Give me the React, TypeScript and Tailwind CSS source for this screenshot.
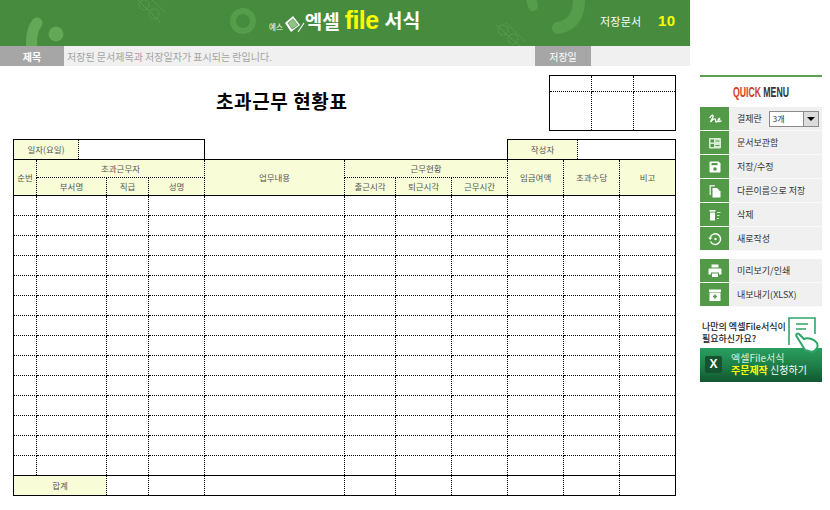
import React from "react";

const font = "font-['Noto_Sans_CJK_KR','Noto_Sans',sans-serif]";
const latin = "font-['Liberation_Sans',sans-serif]";

function HeaderDecor() {
  return (
    <svg className="absolute left-0 top-0" width="690" height="46" viewBox="0 0 690 46" fill="none">
      <path d="M32 50 Q30 32 37 23" stroke="#62a857" strokeWidth="11" strokeLinecap="round" />
      <circle cx="56" cy="34" r="7.5" fill="#62a857" />
      <circle cx="243" cy="21" r="10" stroke="#559c4b" strokeWidth="6" />
      <path d="M579 -6 Q581 24 558 28" stroke="#559c4b" strokeWidth="12" strokeLinecap="round" />
      <path d="M530 -4 L533 6" stroke="#559c4b" strokeWidth="10" strokeLinecap="round" />
      <g stroke="#6fae65" strokeWidth="0.7" strokeDasharray="1.5 1">
        <circle cx="144" cy="5" r="5" />
        <circle cx="154" cy="14" r="5" />
        <path d="M136 -2 L160 22 M146 -6 L165 12" />
        <circle cx="503" cy="30" r="5" />
        <circle cx="513" cy="39" r="5" />
        <path d="M496 25 L520 46 M506 23 L526 42" />
      </g>
    </svg>
  );
}

function Logo() {
  return (
    <div className="absolute left-[269px] top-[-3px] flex h-[46px] items-center text-white">
      <span className="mt-[14px] text-[7.5px] leading-none">예스</span>
      <svg width="22" height="24" viewBox="0 0 22 24" fill="none" className="mt-[8px]">
        <path d="M2 11 L10 4 L17 13 L8 20 Z" fill="#fff" />
        <path d="M5 11 L10 7 L15 13 L9 17 Z" fill="#8fc388" stroke="#478b3e" strokeWidth="0.7" />
        <path d="M15 20 L21 11" stroke="#fff" strokeWidth="1.1" />
      </svg>
      <span className="text-[19px] font-bold leading-none">엑셀</span>
      <span className={`${latin} ml-[5px] text-[25px] font-bold leading-none tracking-[-0.6px] text-[#fdfd00]`}>file</span>
      <span className="ml-[6px] text-[19.5px] font-bold leading-none">서식</span>
    </div>
  );
}

function TopBar() {
  return (
    <div>
      <div className="relative h-[46px] overflow-hidden bg-[#478b3e]">
        <HeaderDecor />
        <Logo />
        <span className="absolute left-[600px] top-[13px] text-[11px] leading-[16px] tracking-[0.2px] text-white">저장문서</span>
        <span className={`${latin} absolute left-[658px] top-[12px] text-[15px] font-bold leading-[18px] tracking-[0.5px] text-[#fdfd00]`}>10</span>
      </div>
      <div className="flex h-[20px] bg-[#f0f0f0] text-[10px]">
        <div className="flex w-[64px] items-center justify-center bg-[#a6a6a6] font-bold text-white">제목</div>
        <div className="flex w-[471px] items-center pl-[3px] text-[#a3a3a3]">저장된 문서제목과 저장일자가 표시되는 란입니다.</div>
        <div className="flex w-[56px] items-center justify-center bg-[#a6a6a6] text-white">저장일</div>
      </div>
    </div>
  );
}

function ApprovalBox() {
  const cell = "border-r border-dotted border-black";
  return (
    <div className="ml-[549px] mt-[9px] grid h-[56px] w-[127px] grid-cols-[42px_42px_1fr] grid-rows-[16px_1fr] border border-black">
      <div className={`${cell} border-b`} />
      <div className={`${cell} border-b`} />
      <div className="border-b border-dotted border-black" />
      <div className={cell} />
      <div className={cell} />
      <div />
    </div>
  );
}

const widths = [23, 70, 42, 56, 140, 51, 56, 56, 56, 56, 56];
const yellow = "bg-[#f8fdd8]";
const th = `border border-dotted border-black ${yellow} p-0 text-center align-middle text-[8.5px] font-normal leading-none text-[#555]`;
const td = "h-[20px] border border-dotted border-black p-0";
const rows = Array.from({ length: 14 }, (_, i) => i);

function InfoBox({ label, labelWidth, width }: { label: string; labelWidth: number; width: number }) {
  return (
    <div className="flex h-[20px] border border-b-0 border-black" style={{ width }}>
      <div className={`flex items-center justify-center border-r border-dotted border-black ${yellow} text-[8.5px] text-[#555]`} style={{ width: labelWidth }}>
        {label}
      </div>
    </div>
  );
}

function Sheet() {
  return (
    <div className="relative ml-[13px] mt-[8px] w-[663px]">
      <h1 className="absolute left-[203px] top-[-51px] text-[19px] font-bold leading-[26px] tracking-[0.6px] text-black">초과근무 현황표</h1>
      <div className="flex justify-between">
        <InfoBox label="일자(요일)" labelWidth={65} width={192} />
        <InfoBox label="작성자" labelWidth={70} width={169} />
      </div>
      <table className="w-[663px] table-fixed border-collapse">
        <colgroup>
          {widths.map((w, i) => (
            <col key={i} style={{ width: w }} />
          ))}
        </colgroup>
        <thead>
          <tr className="h-[18px]">
            <th rowSpan={2} className={`${th} border-t-black [border-top-style:solid] [border-left-style:solid]`}>순번</th>
            <th colSpan={3} className={`${th} [border-top-style:solid]`}>초과근무자</th>
            <th rowSpan={2} className={`${th} [border-top-style:solid]`}>업무내용</th>
            <th colSpan={3} className={`${th} [border-top-style:solid]`}>근무현황</th>
            <th rowSpan={2} className={`${th} [border-top-style:solid]`}>임금여액</th>
            <th rowSpan={2} className={`${th} [border-top-style:solid]`}>초과수당</th>
            <th rowSpan={2} className={`${th} [border-top-style:solid] [border-right-style:solid]`}>비고</th>
          </tr>
          <tr className="h-[18px]">
            {["부서명", "직급", "성명", "출근시각", "퇴근시각", "근무시간"].map((t) => (
              <th key={t} className={th}>{t}</th>
            ))}
          </tr>
        </thead>
        <tbody>
          {rows.map((r) => (
            <tr key={r}>
              {widths.map((_, c) => (
                <td
                  key={c}
                  className={`${td} ${r === 0 ? "[border-top-style:solid]" : ""} ${c === 0 ? "[border-left-style:solid]" : ""} ${c === 10 ? "[border-right-style:solid]" : ""}`}
                />
              ))}
            </tr>
          ))}
          <tr>
            <td colSpan={2} className={`${td} ${yellow} text-center text-[8.5px] leading-none text-[#555] [border-top-style:solid] [border-bottom-style:solid] [border-left-style:solid]`}>합계</td>
            {widths.slice(2).map((_, c) => (
              <td key={c} className={`${td} [border-top-style:solid] [border-bottom-style:solid] ${c === 8 ? "[border-right-style:solid]" : ""}`} />
            ))}
          </tr>
        </tbody>
      </table>
    </div>
  );
}

const Ico = ({ children }: { children: React.ReactNode }) => (
  <svg width="16" height="16" viewBox="0 0 16 16" fill="none">{children}</svg>
);

const icons = {
  sign: (
    <Ico>
      <path d="M3 6.5 C5 3 7 3.5 5.5 7 L3.5 11 C5.5 8.5 8 7 8.5 8.5 C8.5 11 9 11.5 10.5 10.5 C12.5 9 13.5 7 12 7.5 C10.5 8.5 11 12 14 10" stroke="#fff" strokeWidth="1.4" strokeLinecap="round" />
    </Ico>
  ),
  list: (
    <Ico>
      <rect x="2" y="3" width="12" height="10.5" rx="1" fill="#d9ead6" />
      <rect x="3.5" y="4.5" width="3.5" height="3" fill="#529a47" />
      <rect x="3.5" y="9" width="3.5" height="3" fill="#529a47" />
      <path d="M8.5 6 H12.5 M8.5 10.5 H12.5" stroke="#529a47" strokeWidth="1.2" />
    </Ico>
  ),
  save: (
    <Ico>
      <path d="M2.5 3.5 Q2.5 2.5 3.5 2.5 H11.5 L13.5 4.5 V12.5 Q13.5 13.5 12.5 13.5 H3.5 Q2.5 13.5 2.5 12.5 Z" fill="#fff" />
      <rect x="4.5" y="4" width="6" height="2.2" fill="#529a47" />
      <circle cx="8" cy="10" r="1.8" fill="#529a47" />
    </Ico>
  ),
  copy: (
    <Ico>
      <path d="M2.5 2 H8 V3.5 H4 V12 H2.5 Z" fill="#d9ead6" />
      <path d="M5.5 5 H10 L13.5 8.5 V14.5 H5.5 Z" fill="#fff" />
    </Ico>
  ),
  trash: (
    <Ico>
      <rect x="2.5" y="3" width="6" height="1.6" fill="#fff" />
      <path d="M3 5.5 H8 V13.5 H3 Z" fill="#fff" />
      <path d="M10 5.5 H13.5 M10 8.5 H12.5 M10 11.5 H12" stroke="#d9ead6" strokeWidth="1.1" />
    </Ico>
  ),
  renew: (
    <Ico>
      <path d="M3.5 10.5 A5.3 5.3 0 1 0 3.2 6.5" stroke="#fff" strokeWidth="1.4" />
      <path d="M1.2 6.5 H5.2 L3.2 9 Z" fill="#fff" />
      <circle cx="8.5" cy="8" r="1.2" fill="#fff" />
    </Ico>
  ),
  print: (
    <Ico>
      <rect x="4.5" y="1.5" width="7" height="3" fill="#fff" />
      <path d="M1.5 6.5 Q1.5 5.5 2.5 5.5 H13.5 Q14.5 5.5 14.5 6.5 V11.5 H12 V9.5 H4 V11.5 H1.5 Z" fill="#fff" />
      <rect x="5" y="10.5" width="6" height="3.5" fill="#fff" />
    </Ico>
  ),
  box: (
    <Ico>
      <rect x="2" y="2.5" width="12" height="2.5" fill="#fff" />
      <rect x="2.5" y="5.5" width="11" height="8.5" fill="#fff" />
      <path d="M8 7.5 V11.5 M6 9.5 H10" stroke="#529a47" strokeWidth="1.6" />
    </Ico>
  ),
};

function MenuRow({ icon, label, children }: { icon: React.ReactNode; label: string; children?: React.ReactNode }) {
  return (
    <div className="flex h-[24px] border-b border-[#fafafa] bg-[#f0f0f0]">
      <div className="flex w-[29px] items-center justify-center bg-[#529a47]">{icon}</div>
      <div className="flex flex-1 items-center pl-[8px] pt-[1px] text-[9px] text-[#333]">
        <span>{label}</span>
        {children}
      </div>
    </div>
  );
}

function CountSelect() {
  return (
    <div className="ml-[7px] flex h-[16px] w-[50px] items-stretch border border-[#8a8a8a] bg-white">
      <span className="flex-1 pl-[3px] text-[8px] leading-[14px] text-[#333]">3개</span>
      <span className="flex w-[15px] items-center justify-center border-l border-[#8a8a8a] bg-[#dcdcdc]">
        <span className="h-0 w-0 border-x-[4px] border-t-[4px] border-x-transparent border-t-black" />
      </span>
    </div>
  );
}

function QuickMenu() {
  return (
    <div className="w-[122px] pt-[75px]">
      <div className="h-[2px] bg-[#5c9f52]" />
      <div className={`${latin} flex h-[30px] origin-center scale-x-[0.58] items-center justify-center pt-[1px] text-[15px] font-bold text-[#333]`}>
        <span className="text-[#d1411e]">QUICK</span>
        <span className="ml-[4px]">MENU</span>
      </div>
      <MenuRow icon={icons.sign} label="결제란">
        <CountSelect />
      </MenuRow>
      <MenuRow icon={icons.list} label="문서보관함" />
      <MenuRow icon={icons.save} label="저장/수정" />
      <MenuRow icon={icons.copy} label="다른이름으로 저장" />
      <MenuRow icon={icons.trash} label="삭제" />
      <MenuRow icon={icons.renew} label="새로작성" />
      <div className="h-[8px]" />
      <MenuRow icon={icons.print} label="미리보기/인쇄" />
      <MenuRow icon={icons.box} label="내보내기(XLSX)" />
      <Banner />
    </div>
  );
}

function Banner() {
  return (
    <div className="relative mt-[11px]">
      <div className="flex h-[30px] flex-col justify-center pl-[2px] text-[9px] font-medium leading-[12px] text-[#222]">
        <span>나만의 엑셀File서식이</span>
        <span>필요하신가요?</span>
      </div>
      <div className="flex h-[34px] items-center bg-gradient-to-b from-[#2a9f5f] via-[#1f8049] to-[#12562f] pb-[2px] pl-[5px]">
        <div className={`${latin} flex h-[17px] w-[17px] items-center justify-center rounded-[2px] bg-[#14532f] text-[12px] font-bold text-white`}>X</div>
        <div className="ml-[9px] text-[10px] leading-[12px] text-[#d8f0dc]">
          <div>엑셀File서식</div>
          <div className="text-white">
            <span className="font-bold text-[#fdfd00]">주문제작</span> 신청하기
          </div>
        </div>
      </div>
      <svg className="absolute left-[87px] top-[-1px]" width="35" height="38" viewBox="0 0 35 38" fill="none">
        <path d="M2 28 V1 H28 V17" stroke="#2fa56b" strokeWidth="1.6" />
        <path d="M9 7 H21 M9 12 H19" stroke="#2fa56b" strokeWidth="1.6" />
        <path d="M10 20 C8 17 11 15 13 18 L17 22 C21 20 27 22 30 26 C32 30 29 34 25 35 L18 33 Z" fill="#fff" stroke="#2fa56b" strokeWidth="2" />
      </svg>
    </div>
  );
}

export default function App() {
  return (
    <div className={`flex h-[510px] w-[830px] overflow-hidden bg-white ${font}`}>
      <div className="w-[690px]">
        <TopBar />
        <ApprovalBox />
        <Sheet />
      </div>
      <div className="ml-[10px]">
        <QuickMenu />
      </div>
    </div>
  );
}
